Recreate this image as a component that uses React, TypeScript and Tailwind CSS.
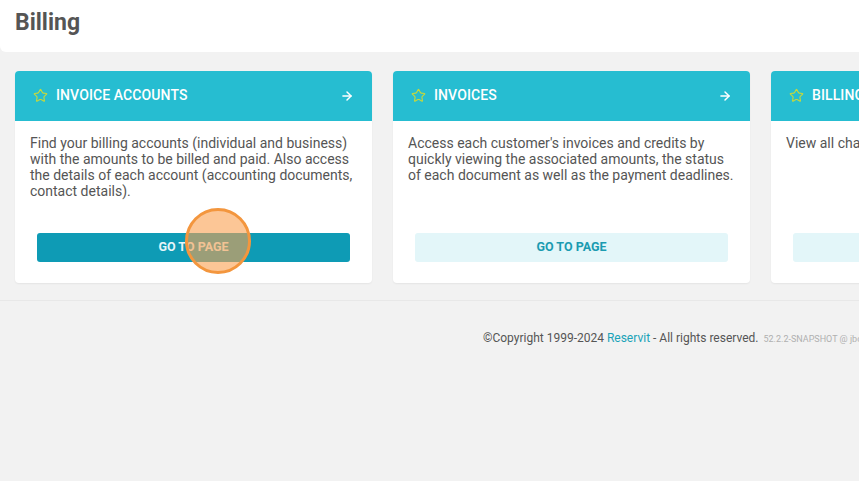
import { Star, ArrowRight } from 'lucide-react'

const cards = [
  {
    title: 'Invoice accounts',
    text: 'Find your billing accounts (individual and business) with the amounts to be billed and paid. Also access the details of each account (accounting documents, contact details).',
    active: true,
  },
  {
    title: 'Invoices',
    text: "Access each customer's invoices and credits by quickly viewing the associated amounts, the status of each document as well as the payment deadlines.",
    active: false,
  },
  {
    title: 'Billing charges',
    text: 'View all charges billed to your customers.',
    active: false,
  },
]

function Card({ title, text, active }: { title: string; text: string; active: boolean }) {
  return (
    <div className="w-[357px] shrink-0 rounded-[4px] bg-white shadow-[0_1px_2px_rgba(0,0,0,0.06)] overflow-hidden flex flex-col">
      <div className="h-[50px] bg-[#26bdd1] flex items-center pl-[18px] pr-[18px] pb-[1px]">
        <Star size={15} strokeWidth={1.8} className="text-[#c6d83c] mr-[8px]" />
        <span className="text-white text-[14px] font-medium uppercase tracking-[0.1px] whitespace-nowrap">{title}</span>
        <ArrowRight size={14} strokeWidth={2.5} className="text-white ml-auto" />
      </div>
      <div className="h-[162px] flex flex-col px-[15px] pt-[14px] pb-[21px]">
        <p className="text-[14px] leading-[16px] text-[#555]">{text}</p>
        <div className="mt-auto px-[7px] relative">
          <button
            className={`w-full h-[29px] rounded-[3px] text-[12.5px] font-bold uppercase ${
              active ? 'bg-[#0e9bb5] text-[#e6f6f9]' : 'bg-[#e3f6f9] text-[#1b9bb1]'
            }`}
          >
            Go to page
          </button>
          {active && (
            <div className="absolute left-[155px] top-[-25px] w-[66px] h-[66px] rounded-full bg-[rgba(250,160,80,0.6)] border-[3px] border-[#f3963e]" />
          )}
        </div>
      </div>
    </div>
  )
}

export default function App() {
  return (
    <div className="w-[859px] h-[481px] bg-[#f2f2f2] overflow-hidden font-['Roboto',sans-serif]">
      {/* Page title */}
      <div className="h-[52px] bg-white rounded-bl-[6px] flex items-center px-[15px] pb-[6px]">
        <h1 className="text-[23px] font-bold text-[#555]">Billing</h1>
      </div>

      {/* Shortcut cards */}
      <div className="flex gap-[21px] pl-[15px] pt-[19px] pb-[17px] border-b border-[#e8e8e8]">
        {cards.map((c) => (
          <Card key={c.title} {...c} />
        ))}
      </div>

      <footer className="flex items-baseline whitespace-nowrap pl-[483px] pt-[28px] text-[12px] text-[#555]">
        <span>
          ©Copyright 1999-2024 <span className="text-[#1ba3b8]">Reservit</span> - All rights reserved.
        </span>
        <span className="ml-[5px] text-[9px] text-[#b0b0b0]">52.2.2-SNAPSHOT @ jboss-prod</span>
      </footer>
    </div>
  )
}
